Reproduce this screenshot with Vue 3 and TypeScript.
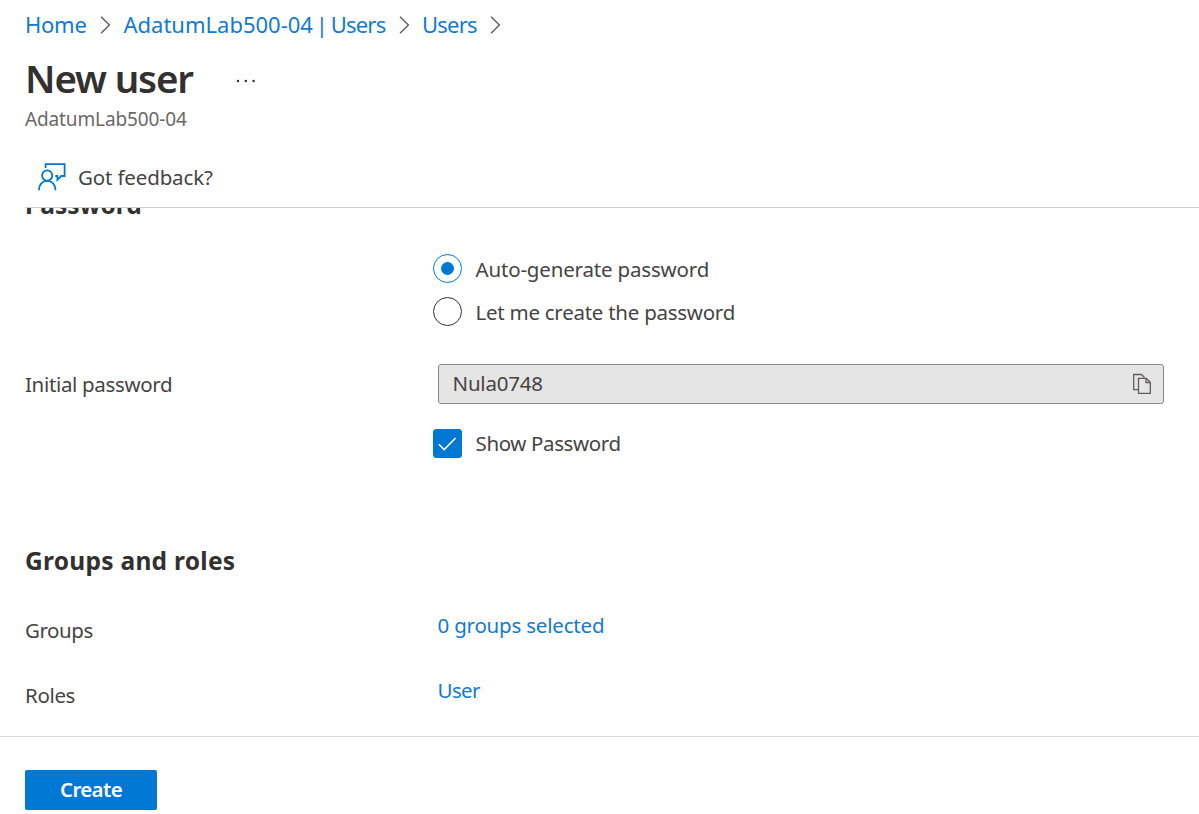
<script setup lang="ts">
import { ref } from 'vue'

interface Crumb { scope?: string; label: string; cls: string }

const crumbs: Crumb[] = [
  { label: 'Home', cls: 'c-home' },
  { scope: 'AdatumLab500-04 | ', label: 'Users', cls: 'c-tenant' },
  { label: 'Users', cls: 'c-users' },
]
const mode = ref<'auto' | 'manual'>('auto')
const showPassword = ref(true)
const password = 'Nula0748'
</script>

<template>
  <div class="page">
    <header class="header">
      <nav class="crumbs">
        <template v-for="c in crumbs" :key="c.cls">
          <a class="crumb" :class="c.cls"><span v-if="c.scope" class="scope">{{ c.scope }}</span>{{ c.label }}</a>
          <svg class="chevron" width="11" height="18" viewBox="0 0 11 18"><path d="M1 .8 9.4 9 1 17.2" /></svg>
        </template>
      </nav>
      <div class="title-row">
        <h1>New user</h1>
        <svg class="dots" width="20" height="4" viewBox="0 0 20 4">
          <circle cx="2" cy="2" r="1.2" /><circle cx="9.8" cy="2" r="1.2" /><circle cx="17.6" cy="2" r="1.2" />
        </svg>
      </div>
      <div class="subtitle">AdatumLab500-04</div>
      <div class="toolbar">
        <svg class="feedback-icon" width="29" height="28" viewBox="0 0 29 28">
          <path d="M8.6 5V1.2H27.6V13H24.3L20.4 16.900V13H18.300" />
          <circle cx="10.200" cy="12.500" r="5.100" />
          <path d="M1.900 27.200C1.900 21.500 5.500 17.900 10.200 17.900S18.500 21.500 18.500 27.200" />
        </svg>
        <span class="feedback">Got feedback?</span>
      </div>
    </header>

    <main class="content">
      <h2 class="pw-heading">Password</h2>
      <div class="options">
        <div class="option" @click="mode = 'auto'">
          <span class="radio" :class="{ on: mode === 'auto' }"></span>
          <span class="t-auto">Auto-generate password</span>
        </div>
        <div class="option" @click="mode = 'manual'">
          <span class="radio" :class="{ on: mode === 'manual' }"></span>
          <span class="t-let">Let me create the password</span>
        </div>
      </div>
      <div class="field">
        <span class="label t-initial">Initial password</span>
        <div class="input">
          <span class="t-value">{{ password }}</span>
          <svg width="20" height="22" viewBox="0 0 20 22">
            <path d="M6 16.700H1.700V1.500H9.500L12.500 4.500" />
            <path d="M6.500 5.300H14.300L18.300 9.200V20.300H6.500ZM14 5.300V9.500H18.300" />
          </svg>
        </div>
      </div>
      <div class="option show" @click="showPassword = !showPassword">
        <span class="check" :class="{ on: showPassword }">
          <svg v-if="showPassword" width="19" height="14" viewBox="0 0 19 14"><path d="M.8 7.200 6.200 12.600 17.600 1" /></svg>
        </span>
        <span class="t-show">Show Password</span>
      </div>
      <h2 class="groups-heading">Groups and roles</h2>
      <div class="row"><span class="label t-groups">Groups</span><a class="t-selected">0 groups selected</a></div>
      <div class="row"><span class="label t-roles">Roles</span><a class="t-user">User</a></div>
    </main>

    <footer class="footer"><button class="create">Create</button></footer>
  </div>
</template>

<style>
body { margin: 0; background: #fff; }
</style>

<style scoped>
.page {
  width: 1199px; height: 814px; overflow: hidden; box-sizing: border-box;
  display: flex; flex-direction: column;
  font-family: "Noto Sans", "Open Sans", sans-serif;
  font-size: 20.5px; line-height: 28px; color: #454443; white-space: nowrap;
}
svg { flex: none; fill: none; display: block; }
a { color: #0f7bd3; }
h1, h2 { margin: 0; color: #323130; font-weight: 600; }
.header { height: 207px; flex: none; margin-left: 25px; border-bottom: 1px solid #cfcfcf; }
.crumbs { height: 50px; display: flex; align-items: center; font-size: 22px; }
.crumb { flex: none; padding-bottom: 2px; }
.c-home { width: 75px; letter-spacing: -.25px; }
.c-tenant { width: 275.5px; padding-left: .5px; letter-spacing: -.8px; }
.scope { letter-spacing: 0; word-spacing: -2.9px; white-space: pre; }
.c-users { width: 68px; letter-spacing: -.8px; }
.chevron { margin-right: 12px; stroke: #605e5c; stroke-width: 1.4; }
.title-row { height: 56px; display: flex; align-items: center; }
h1 { width: 211px; font-size: 38.5px; line-height: 56px; letter-spacing: -1.15px; }
.dots { fill: #323130; margin-top: 5px; }
.subtitle { height: 25px; line-height: 27px; font-size: 19px; letter-spacing: -.13px; color: #6b6967; }
.toolbar { height: 60px; margin-top: 16px; padding-left: 12px; display: flex; align-items: center; }
.feedback-icon { stroke: #0078d4; stroke-width: 1.8; margin-right: 12px; }
.feedback { letter-spacing: -.15px; }
.content { flex: 1; min-height: 0; overflow: hidden; padding-left: 25px; }
h2 { font-size: 24.5px; line-height: 30px; font-weight: 700; }
.pw-heading { margin-top: -18px; }
.options { margin-top: 34px; display: flex; flex-direction: column; gap: 14px; }
.option { height: 29px; display: flex; align-items: center; gap: 13.5px; padding-left: 408px; }
.t-auto { letter-spacing: -.17px; }
.t-let { letter-spacing: -.26px; }
.radio { width: 29px; height: 29px; flex: none; box-sizing: border-box; border: 1px solid #323130; border-radius: 50%; display: grid; place-items: center; }
.radio.on { border-color: #0078d4; }
.radio.on::after { content: ""; width: 13px; height: 13px; border-radius: 50%; background: #0078d4; }
.field { height: 40px; margin-top: 38px; display: flex; align-items: center; }
.label { width: 412.5px; flex: none; }
.t-initial { width: 413px; letter-spacing: -.34px; }
.input { width: 726px; height: 40px; box-sizing: border-box; border: 1px solid #8a8886; border-radius: 3px; background: #e5e5e5; padding: 0 11px 0 13.5px; display: flex; align-items: center; justify-content: space-between; }
.t-value { letter-spacing: -.2px; padding-bottom: 2px; }
.input svg { stroke: #605e5c; stroke-width: 1.3; }
.show { margin-top: 25px; }
.t-show { letter-spacing: -.37px; padding-bottom: 2px; }
.check { width: 29px; height: 29px; flex: none; box-sizing: border-box; border: 1px solid #323130; border-radius: 3px; display: grid; place-items: center; }
.check.on { background: #0078d4; border-color: #0078d4; }
.check svg { stroke: #fff; stroke-width: 1.6; }
.groups-heading { margin-top: 88px; margin-bottom: 21px; letter-spacing: .27px; }
.row { height: 65px; display: flex; align-items: center; }
.row a { margin-top: -10px; }
.t-groups { letter-spacing: -.45px; }
.t-roles { letter-spacing: -.35px; }
.t-selected { letter-spacing: -.2px; }
.t-user { letter-spacing: -.6px; }
.footer { height: 44px; flex: none; border-top: 1px solid #d9d9d9; padding: 33px 0 0 25px; }
.create { display: block; width: 132px; height: 40px; border: 0; border-radius: 2px; padding: 0 0 2px; background: #0078d4; color: #fff; font: 600 20.5px/38px "Noto Sans", sans-serif; letter-spacing: -.65px; }
</style>
